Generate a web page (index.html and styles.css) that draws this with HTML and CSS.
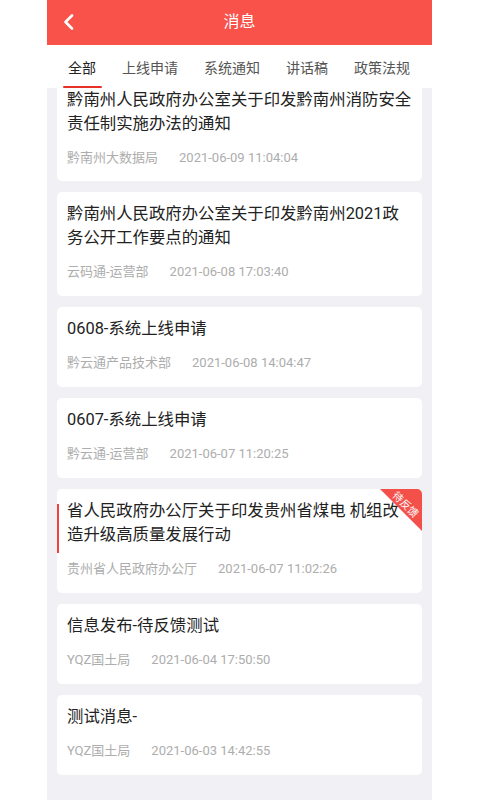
FILE: index.html
```html
<!DOCTYPE html>
<html lang="zh">
<head>
<meta charset="utf-8">
<title>消息</title>
<link rel="stylesheet" href="styles.css">
</head>
<body>
<div class="app">
  <header class="header">
    <div class="back">
      <svg width="12" height="16" viewBox="0 0 12 16"><polyline points="9,1.5 2.5,8 9,14.5" fill="none" stroke="#fff" stroke-width="2.6" stroke-linecap="round" stroke-linejoin="round"/></svg>
    </div>
    <div class="title">消息</div>
    <div class="spacer"></div>
  </header>
  <nav class="tabs">
    <div class="tab active">全部</div>
    <div class="tab">上线申请</div>
    <div class="tab">系统通知</div>
    <div class="tab">讲话稿</div>
    <div class="tab">政策法规</div>
  </nav>
  <main class="list">
    <div class="card first">
      <div class="card-title">黔南州人民政府办公室关于印发黔南州消防安全责任制实施办法的通知</div>
      <div class="meta"><span>黔南州大数据局</span><span class="date">2021-06-09 11:04:04</span></div>
    </div>
    <div class="card">
      <div class="card-title">黔南州人民政府办公室关于印发黔南州2021政务公开工作要点的通知</div>
      <div class="meta"><span>云码通-运营部</span><span class="date">2021-06-08 17:03:40</span></div>
    </div>
    <div class="card">
      <div class="card-title">0608-系统上线申请</div>
      <div class="meta"><span>黔云通产品技术部</span><span class="date">2021-06-08 14:04:47</span></div>
    </div>
    <div class="card">
      <div class="card-title">0607-系统上线申请</div>
      <div class="meta"><span>黔云通-运营部</span><span class="date">2021-06-07 11:20:25</span></div>
    </div>
    <div class="card marked">
      <div class="card-title">省人民政府办公厅关于印发贵州省煤电 机组改造升级高质量发展行动</div>
      <div class="meta"><span>贵州省人民政府办公厅</span><span class="date">2021-06-07 11:02:26</span></div>
      <div class="corner"></div>
      <span class="corner-text">待反馈</span>
    </div>
    <div class="card">
      <div class="card-title">信息发布-待反馈测试</div>
      <div class="meta"><span>YQZ国土局</span><span class="date">2021-06-04 17:50:50</span></div>
    </div>
    <div class="card">
      <div class="card-title">测试消息-</div>
      <div class="meta"><span>YQZ国土局</span><span class="date">2021-06-03 14:42:55</span></div>
    </div>
  </main>
</div>
</body>
</html>
```
FILE: styles.css
```css
* { box-sizing: border-box; }
html, body {
  margin: 0;
  padding: 0;
  background: #ffffff;
}
body {
  font-family: Roboto, "Noto Sans CJK SC", "Noto Sans", sans-serif;
}
.app {
  width: 385px;
  height: 800px;
  margin-left: 47px;
  background: #f1f0f5;
  display: flex;
  flex-direction: column;
  overflow: hidden;
}
.header {
  height: 45px;
  flex: none;
  background: #f9524b;
  display: grid;
  grid-template-columns: 1fr auto 1fr;
  align-items: center;
}
.back {
  padding-left: 16px;
  display: flex;
  align-items: center;
  height: 100%;
}
.back svg { display: block; margin-top: -1px; }
.title {
  color: #fff;
  font-size: 16px;
  line-height: 20px;
  margin-top: -2px;
}
.tabs {
  height: 43px;
  flex: none;
  background: #fff;
  display: flex;
  gap: 26px;
  padding-left: 21px;
  position: relative;
  z-index: 1;
}
.tab {
  display: flex;
  flex-direction: column;
  align-items: center;
  padding-top: 13px;
  font-size: 14px;
  line-height: 20px;
  color: #555;
}
.tab.active { color: #222; }
.tab.active::after {
  content: "";
  display: block;
  width: 39px;
  height: 2px;
  margin: 8px -6px 0;
  background: #e8302a;
  border-radius: 1px;
}
.list {
  flex: 1;
  overflow: hidden;
  padding: 0 10px;
  display: flex;
  flex-direction: column;
  gap: 11px;
}
.card {
  flex: none;
  background: #fff;
  border-radius: 5px;
  padding: 10px 10px 14px;
  position: relative;
  overflow: hidden;
}
.card.first {
  margin-top: -10px;
  padding-bottom: 13px;
}
.card-title {
  font-size: 16.4px;
  line-height: 24px;
  color: #222;
}
.meta {
  margin-top: 12px;
  font-size: 13px;
  line-height: 20px;
  color: #adadad;
  display: flex;
  gap: 21px;
}
.card.marked::before {
  content: "";
  position: absolute;
  left: 0;
  top: 15px;
  width: 2px;
  height: 49px;
  background: #f0433c;
}
.corner {
  position: absolute;
  top: 0;
  right: 0;
  width: 42px;
  height: 42px;
  background: #f4504a;
  clip-path: polygon(0 0, 100% 0, 100% 100%);
}
.corner-text {
  position: absolute;
  top: 9px;
  right: 0;
  width: 34px;
  text-align: center;
  font-size: 10.5px;
  line-height: 14px;
  color: #fff;
  white-space: nowrap;
  transform: rotate(45deg);
}
```
